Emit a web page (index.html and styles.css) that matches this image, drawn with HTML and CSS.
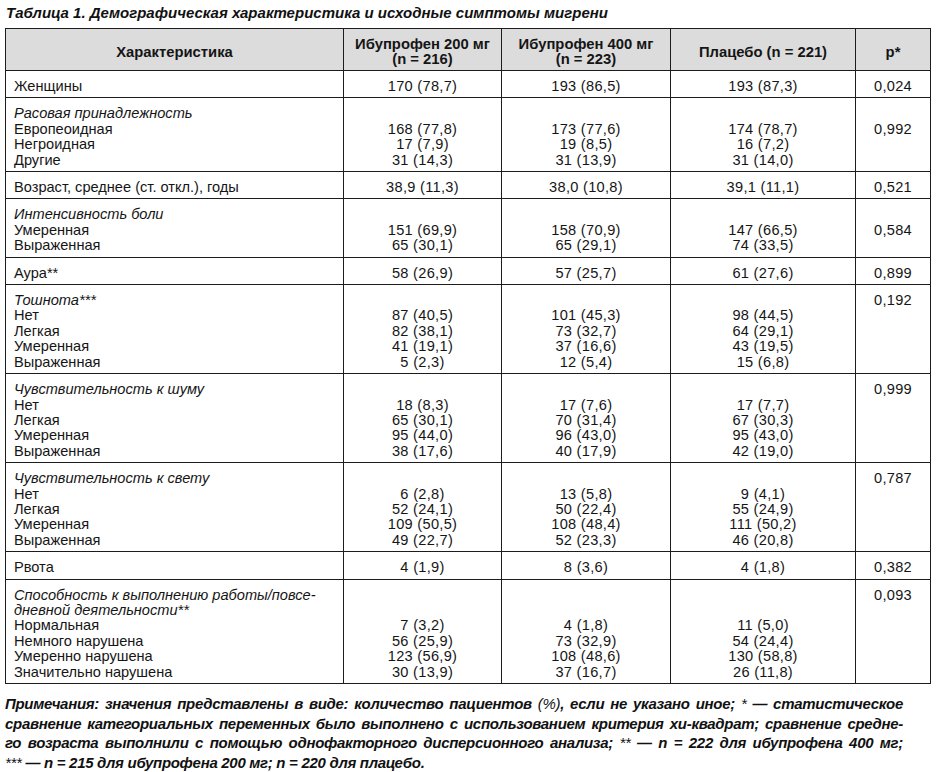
FILE: index.html
```html
<!DOCTYPE html>
<html lang="ru">
<head>
<meta charset="utf-8">
<title>Таблица 1</title>
<link rel="stylesheet" href="styles.css">
</head>
<body>
<div class="page">
  <h1 class="title">Таблица 1. Демографическая характеристика и исходные симптомы мигрени</h1>
  <table class="tbl">
    <colgroup>
      <col class="c1"><col class="c2"><col class="c3"><col class="c4"><col class="c5">
    </colgroup>
    <thead>
      <tr>
        <th>Характеристика</th>
        <th>Ибупрофен 200 мг<br>(n = 216)</th>
        <th>Ибупрофен 400 мг<br>(n = 223)</th>
        <th>Плацебо (n = 221)</th>
        <th>p*</th>
      </tr>
    </thead>
    <tbody>
      <tr>
        <td class="lbl">Женщины</td>
        <td class="num">170 (78,7)</td><td class="num">193 (86,5)</td><td class="num">193 (87,3)</td><td class="p">0,024</td>
      </tr>
      <tr>
        <td class="lbl"><i>Расовая принадлежность</i><br>Европеоидная<br>Негроидная<br>Другие</td>
        <td class="num">168 (77,8)<br>17 (7,9)<br>31 (14,3)</td>
        <td class="num">173 (77,6)<br>19 (8,5)<br>31 (13,9)</td>
        <td class="num">174 (78,7)<br>16 (7,2)<br>31 (14,0)</td>
        <td class="p p2">0,992</td>
      </tr>
      <tr>
        <td class="lbl">Возраст, среднее (ст. откл.), годы</td>
        <td class="num">38,9 (11,3)</td><td class="num">38,0 (10,8)</td><td class="num">39,1 (11,1)</td><td class="p">0,521</td>
      </tr>
      <tr>
        <td class="lbl"><i>Интенсивность боли</i><br>Умеренная<br>Выраженная</td>
        <td class="num">151 (69,9)<br>65 (30,1)</td>
        <td class="num">158 (70,9)<br>65 (29,1)</td>
        <td class="num">147 (66,5)<br>74 (33,5)</td>
        <td class="p p2">0,584</td>
      </tr>
      <tr>
        <td class="lbl">Аура**</td>
        <td class="num">58 (26,9)</td><td class="num">57 (25,7)</td><td class="num">61 (27,6)</td><td class="p">0,899</td>
      </tr>
      <tr>
        <td class="lbl"><i>Тошнота***</i><br>Нет<br>Легкая<br>Умеренная<br>Выраженная</td>
        <td class="num">87 (40,5)<br>82 (38,1)<br>41 (19,1)<br>5 (2,3)</td>
        <td class="num">101 (45,3)<br>73 (32,7)<br>37 (16,6)<br>12 (5,4)</td>
        <td class="num">98 (44,5)<br>64 (29,1)<br>43 (19,5)<br>15 (6,8)</td>
        <td class="p">0,192</td>
      </tr>
      <tr>
        <td class="lbl"><i>Чувствительность к шуму</i><br>Нет<br>Легкая<br>Умеренная<br>Выраженная</td>
        <td class="num">18 (8,3)<br>65 (30,1)<br>95 (44,0)<br>38 (17,6)</td>
        <td class="num">17 (7,6)<br>70 (31,4)<br>96 (43,0)<br>40 (17,9)</td>
        <td class="num">17 (7,7)<br>67 (30,3)<br>95 (43,0)<br>42 (19,0)</td>
        <td class="p">0,999</td>
      </tr>
      <tr>
        <td class="lbl"><i>Чувствительность к свету</i><br>Нет<br>Легкая<br>Умеренная<br>Выраженная</td>
        <td class="num">6 (2,8)<br>52 (24,1)<br>109 (50,5)<br>49 (22,7)</td>
        <td class="num">13 (5,8)<br>50 (22,4)<br>108 (48,4)<br>52 (23,3)</td>
        <td class="num">9 (4,1)<br>55 (24,9)<br>111 (50,2)<br>46 (20,8)</td>
        <td class="p">0,787</td>
      </tr>
      <tr>
        <td class="lbl">Рвота</td>
        <td class="num">4 (1,9)</td><td class="num">8 (3,6)</td><td class="num">4 (1,8)</td><td class="p">0,382</td>
      </tr>
      <tr>
        <td class="lbl"><i>Способность к выполнению работы/повсе-<br>дневной деятельности**</i><br>Нормальная<br>Немного нарушена<br>Умеренно нарушена<br>Значительно нарушена</td>
        <td class="num">7 (3,2)<br>56 (25,9)<br>123 (56,9)<br>30 (13,9)</td>
        <td class="num">4 (1,8)<br>73 (32,9)<br>108 (48,6)<br>37 (16,7)</td>
        <td class="num">11 (5,0)<br>54 (24,4)<br>130 (58,8)<br>26 (11,8)</td>
        <td class="p">0,093</td>
      </tr>
    </tbody>
  </table>
  <p class="note">
    <span class="ln j">Примечания: значения представлены в виде: количество пациентов <span class="reg">(%)</span>, если не указано иное; <span class="reg">*</span> — статистическое</span>
    <span class="ln j">сравнение категориальных переменных было выполнено с использованием критерия хи-квадрат; сравнение средне-</span>
    <span class="ln j">го возраста выполнили с помощью однофакторного дисперсионного анализа; <span class="reg">**</span> — n = 222 для ибупрофена 400 мг;</span>
    <span class="ln"><span class="reg">***</span> — n = 215 для ибупрофена 200 мг; n = 220 для плацебо.</span>
  </p>
</div>
</body>
</html>
```

FILE: styles.css
```css
html, body {
  margin: 0;
  padding: 0;
  background: #fff;
}

body {
  font-family: "Liberation Sans", Arial, sans-serif;
  color: #151515;
}

.page {
  padding: 3px 0 0 5px;
  width: 925px;
}

.title {
  margin: 0 0 5px 1px;
  font-size: 15px;
  line-height: 20px;
  font-weight: bold;
  font-style: italic;
  color: #111;
}

.tbl {
  border-collapse: collapse;
  width: 925px;
  table-layout: fixed;
  font-size: 14.6px;
  line-height: 15.4px;
}

.c1 { width: 338px; }
.c2 { width: 158px; }
.c3 { width: 169px; }
.c4 { width: 185px; }
.c5 { width: 75px; }

.tbl th,
.tbl td {
  border: 1px solid #1c1c1c;
  padding: 8px 8px 3px;
}

.tbl th {
  background: #dcdcdc;
  font-weight: bold;
  font-size: 14.8px;
  line-height: 15px;
  text-align: center;
  vertical-align: middle;
}

.tbl td {
  vertical-align: top;
}

.tbl td.lbl {
  text-align: left;
}

.tbl td.num {
  text-align: center;
  vertical-align: bottom;
  letter-spacing: 0.3px;
}

.tbl td.p {
  text-align: center;
  letter-spacing: 0.3px;
}

.tbl td.p2 {
  padding-top: 23.4px;
}

.note {
  margin: 10px 0 0;
  font-size: 15px;
  line-height: 19.5px;
  font-weight: bold;
  font-style: italic;
  letter-spacing: -0.3px;
  color: #111;
  width: 898px;
}

.ln {
  display: block;
  white-space: nowrap;
}

.ln.j {
  text-align: justify;
  text-align-last: justify;
}

.reg {
  font-weight: normal;
}
```
